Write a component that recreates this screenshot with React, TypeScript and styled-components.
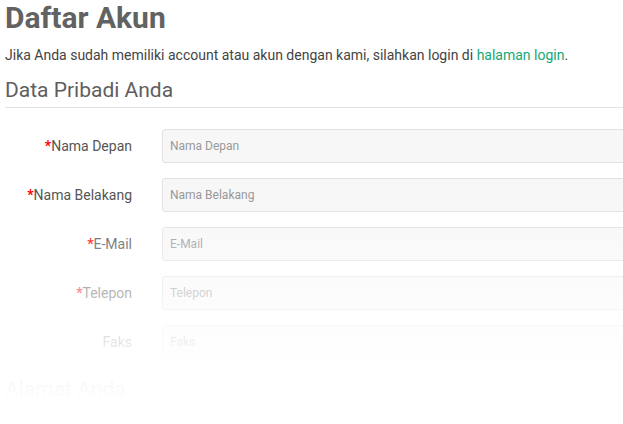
import React from "react";
import styled, { createGlobalStyle } from "styled-components";

const GlobalStyle = createGlobalStyle`
  html, body {
    margin: 0;
    padding: 0;
    background: #fff;
    overflow: hidden;
  }
  body {
    font-family: Roboto, "Liberation Sans", Arial, sans-serif;
    color: #555;
  }
`;

const Page = styled.div`
  position: relative;
  width: 623px;
  height: 424px;
  overflow: hidden;
  padding-left: 5px;
  box-sizing: border-box;
`;

const Title = styled.h1`
  margin: 0;
  font-size: 30px;
  line-height: 36px;
  font-weight: 700;
  color: #626262;
`;

const Intro = styled.p`
  margin: 9px 0 0;
  font-size: 14px;
  line-height: 20px;
  color: #444;

  a {
    color: #14a874;
    text-decoration: none;
  }
`;

const SectionTitle = styled.h2`
  margin: 12px 0 0;
  padding-bottom: 4px;
  font-size: 21px;
  line-height: 26px;
  font-weight: 400;
  color: #5e5e5e;
  border-bottom: 1px solid #e3e3e3;
`;

const Form = styled.div`
  display: flex;
  flex-direction: column;
  gap: 15px;
  margin-top: 21px;
`;

const Row = styled.div`
  display: grid;
  grid-template-columns: 127px 520px;
  column-gap: 30px;
  align-items: center;
`;

const Label = styled.label`
  text-align: right;
  font-size: 14px;
  color: #555;
`;

const Star = styled.span`
  color: #f00;
  font-weight: 700;
`;

const Input = styled.input`
  box-sizing: border-box;
  height: 34px;
  width: 100%;
  padding: 0 7px;
  background: #f7f7f7;
  border: 1px solid #e2e2e2;
  border-radius: 3px;
  font-family: Roboto, "Liberation Sans", Arial, sans-serif;
  font-size: 12px;
  color: #555;
  outline: none;

  &::placeholder {
    color: #999;
  }
`;

const NextSection = styled(SectionTitle)`
  margin-top: 17px;
  border-bottom: none;
`;

const Fade = styled.div`
  position: absolute;
  inset: 0;
  pointer-events: none;
  background: linear-gradient(
    to bottom,
    rgba(255, 255, 255, 0) 0,
    rgba(255, 255, 255, 0) 205px,
    rgba(255, 255, 255, 0.55) 290px,
    rgba(255, 255, 255, 0.86) 345px,
    rgba(255, 255, 255, 0.985) 395px
  );
`;

const fields = [
  { name: "Nama Depan", required: true },
  { name: "Nama Belakang", required: true },
  { name: "E-Mail", required: true },
  { name: "Telepon", required: true },
  { name: "Faks", required: false },
];

export default function App() {
  return (
    <>
      <GlobalStyle />
      <Page>
        <Title>Daftar Akun</Title>
        <Intro>
          Jika Anda sudah memiliki account atau akun dengan kami, silahkan login di{" "}
          <a href="#">halaman login</a>.
        </Intro>
        <SectionTitle>Data Pribadi Anda</SectionTitle>
        <Form>
          {fields.map((f) => (
            <Row key={f.name}>
              <Label>
                {f.required && <Star>*</Star>}
                {f.name}
              </Label>
              <Input placeholder={f.name} />
            </Row>
          ))}
        </Form>
        <NextSection>Alamat Anda</NextSection>
        <Fade />
      </Page>
    </>
  );
}
